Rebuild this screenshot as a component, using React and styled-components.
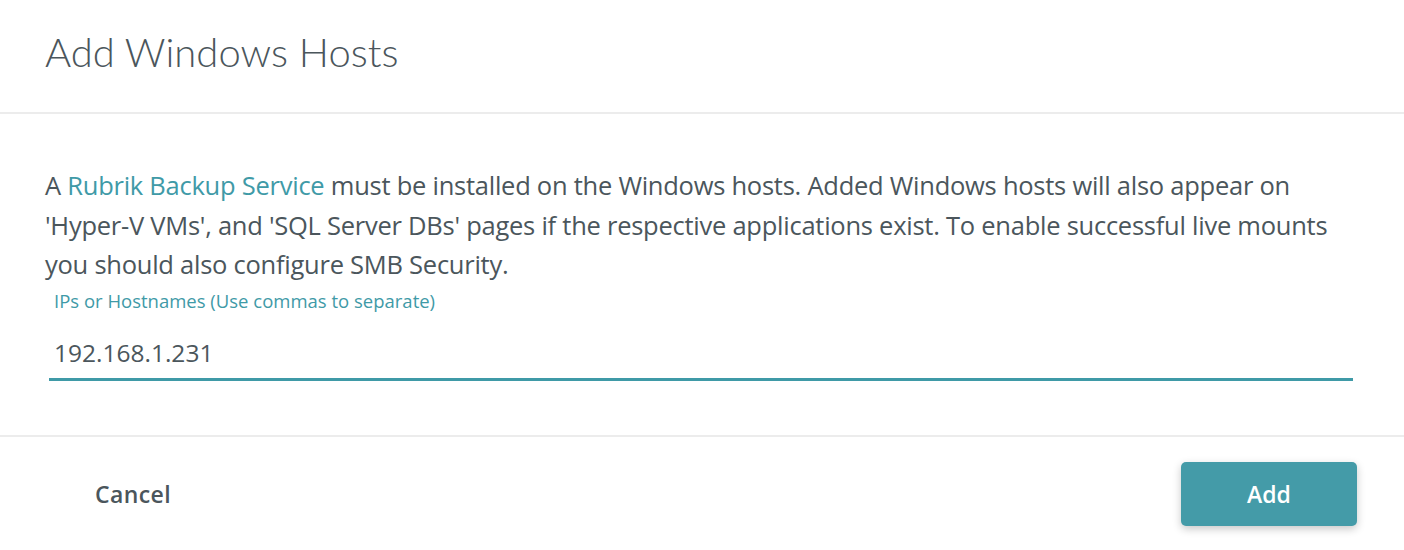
import React from "react";
import styled, { createGlobalStyle } from "styled-components";

const GlobalStyle = createGlobalStyle`
  html, body {
    margin: 0;
    padding: 0;
    background: #fff;
    font-family: "Open Sans", "Noto Sans", sans-serif;
  }
`;

const Dialog = styled.div`
  width: 1404px;
  height: 550px;
  background: #fff;
  display: flex;
  flex-direction: column;
  overflow: hidden;
`;

const Header = styled.header`
  height: 114px;
  border-bottom: 2px solid #ececec;
  padding: 0 45px;
  display: flex;
  align-items: center;
  box-sizing: border-box;
`;

const Title = styled.h1`
  margin: 0;
  font-family: Lato, "Open Sans", sans-serif;
  font-size: 40px;
  font-weight: 300;
  color: #4b565c;
  padding-bottom: 9px;
`;

const Body = styled.section`
  height: 323px;
  border-bottom: 2px solid #ececec;
  box-sizing: border-box;
  padding: 52px 45px 0 45px;
`;

const Description = styled.p`
  margin: 0;
  font-size: 25.5px;
  line-height: 39.5px;
  letter-spacing: -0.25px;
  color: #4b565c;
`;

const Link = styled.a`
  color: #3f9aa7;
  text-decoration: none;
`;

const Field = styled.div`
  margin: 4px 6px 0 4px;
  display: flex;
  flex-direction: column;
`;

const Label = styled.label`
  font-size: 18.5px;
  line-height: 24px;
  color: #3f9aa7;
  padding-left: 5px;
`;

const Input = styled.input`
  border: none;
  border-bottom: 3px solid #3f9aa7;
  outline: none;
  font-family: inherit;
  font-size: 24.5px;
  line-height: 33px;
  height: 68px;
  box-sizing: border-box;
  color: #4b565c;
  padding: 23px 5px 9px 5px;
  background: transparent;
`;

const Footer = styled.footer`
  flex: 1;
  display: flex;
  align-items: center;
  justify-content: space-between;
  padding: 1px 47px 0 68px;
`;

const TextButton = styled.button`
  background: none;
  border: none;
  font-family: inherit;
  font-size: 23px;
  font-weight: 600;
  letter-spacing: 0.4px;
  color: #4b565c;
  padding: 10px 27px;
  cursor: pointer;
`;

const PrimaryButton = styled.button`
  width: 176px;
  height: 64px;
  background: #449ba8;
  border: none;
  border-radius: 5px;
  color: #fff;
  font-family: inherit;
  font-size: 23px;
  font-weight: 600;
  box-shadow: 0 3px 8px rgba(0, 0, 0, 0.22);
  cursor: pointer;
`;

export default function App() {
  return (
    <>
      <GlobalStyle />
      <Dialog>
        <Header>
          <Title>Add Windows Hosts</Title>
        </Header>
        <Body>
          <Description>
            A <Link href="#">Rubrik Backup Service</Link> must be installed on the Windows hosts. Added Windows hosts will also appear on 'Hyper-V VMs', and 'SQL Server DBs' pages if the respective applications exist. To enable successful live mounts you should also configure SMB Security.
          </Description>
          <Field>
            <Label>IPs or Hostnames (Use commas to separate)</Label>
            <Input defaultValue="192.168.1.231" />
          </Field>
        </Body>
        <Footer>
          <TextButton>Cancel</TextButton>
          <PrimaryButton>Add</PrimaryButton>
        </Footer>
      </Dialog>
    </>
  );
}
